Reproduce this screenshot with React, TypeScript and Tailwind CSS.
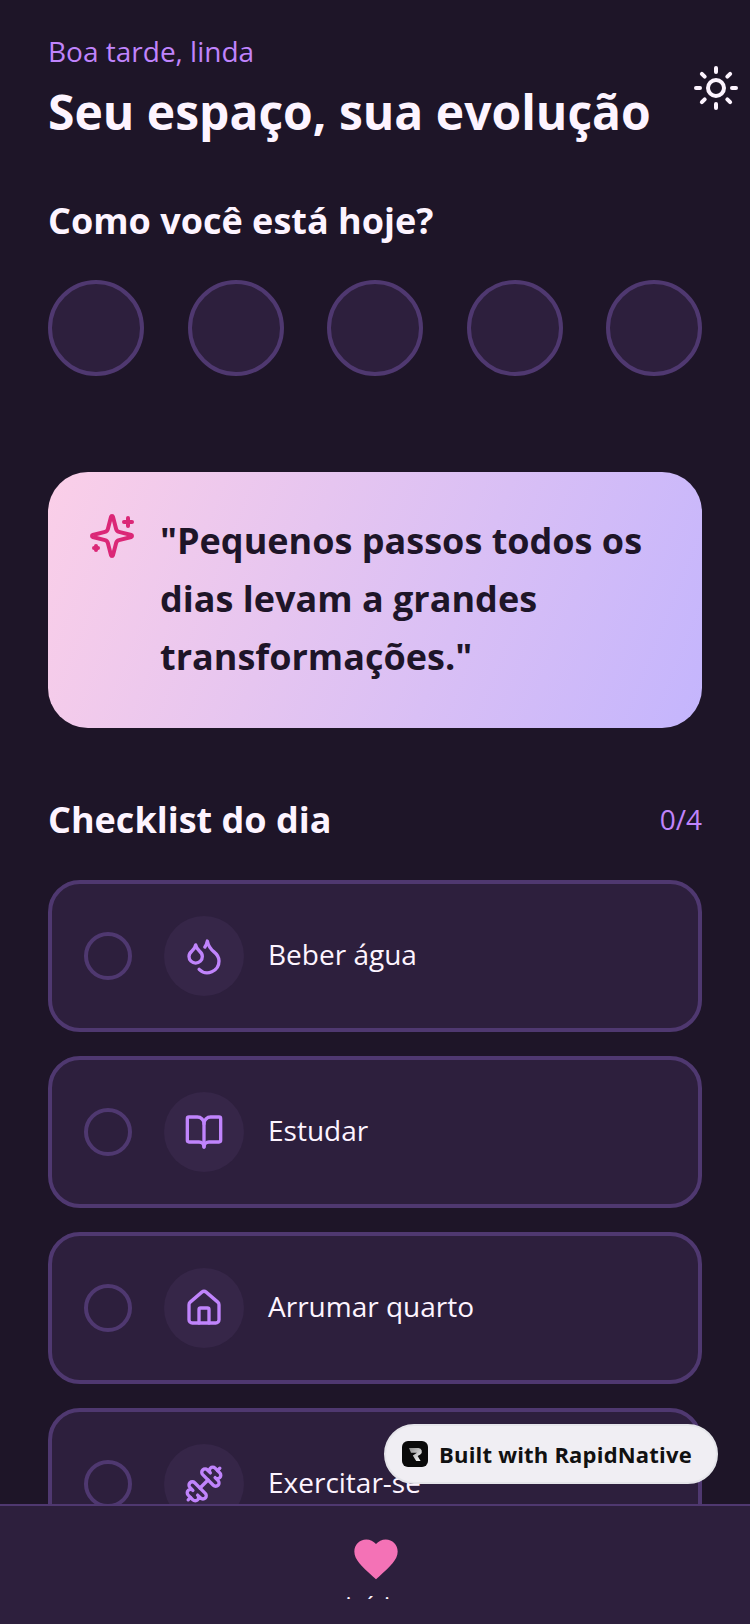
import { Sun, Droplets, BookOpen, House, Dumbbell } from "lucide-react";
import { MdFavorite } from "react-icons/md";

const rows = [
  { label: "Beber água", Icon: Droplets },
  { label: "Estudar", Icon: BookOpen },
  { label: "Arrumar quarto", Icon: House },
  { label: "Exercitar-se", Icon: Dumbbell },
];

export default function App() {
  return (
    <div className="relative flex h-[1624px] w-[750px] flex-col overflow-hidden bg-[#1e1528] font-['Open_Sans',sans-serif] text-[#fdf4ff]">
      <main className="min-h-0 flex-1 overflow-hidden px-12 pt-[31px]">
        <header className="flex items-center justify-between">
          <div>
            <p className="text-[28px] leading-[40px] text-[#c084fc]">Boa tarde, linda</p>
            <h1 className="mt-[9px] text-[48px] leading-[64px] font-bold">Seu espaço, sua evolução</h1>
          </div>
          <Sun size={48} strokeWidth={2} className="-mr-[38px] shrink-0 text-[#fdf4ff]" />
        </header>

        <h2 className="mt-[53px] text-[36px] leading-[48px] font-bold">Como você está hoje?</h2>
        <div className="mt-[35px] flex justify-between">
          {[0, 1, 2, 3, 4].map((i) => (
            <div key={i} className="h-24 w-24 rounded-full border-4 border-[#4f3870] bg-[#2d1f3d]" />
          ))}
        </div>

        <section className="mt-24 flex h-64 gap-6 rounded-[40px] bg-[linear-gradient(112deg,#fbcfe8,#c4b5fd)] p-10">
          <svg viewBox="0 0 24 24" fill="none" stroke="currentColor" strokeWidth="2" strokeLinecap="round" strokeLinejoin="round" className="h-12 w-12 shrink-0 text-[#db2777]">
            <path d="M9.937 15.5A2 2 0 0 0 8.5 14.063l-6.135-1.582a.5.5 0 0 1 0-.962L8.5 9.936A2 2 0 0 0 9.937 8.5l1.582-6.135a.5.5 0 0 1 .963 0L14.063 8.5A2 2 0 0 0 15.5 9.937l6.135 1.581a.5.5 0 0 1 0 .964L15.5 14.063a2 2 0 0 0-1.437 1.437l-1.582 6.135a.5.5 0 0 1-.963 0z" />
            <path d="M20 3v4" />
            <path d="M22 5h-4" />
            <path d="M4 17v2" />
            <path d="M5 18H3" />
          </svg>
          <p className="text-[36px] leading-[58px] font-bold text-[#1e1528]">
            "Pequenos passos todos os dias levam a grandes transformações."
          </p>
        </section>

        <div className="mt-[64px] flex items-center justify-between">
          <h2 className="text-[36px] leading-[56px] font-bold">Checklist do dia</h2>
          <span className="pb-0.5 text-[28px] leading-[40px] text-[#c084fc]">0/4</span>
        </div>

        <div className="mt-[32px] flex flex-col gap-6">
          {rows.map(({ label, Icon }) => (
            <div key={label} className="flex h-[152px] shrink-0 items-center rounded-[32px] border-4 border-[#4f3870] bg-[#2d1f3d] px-8">
              <div className="h-12 w-12 shrink-0 rounded-full border-4 border-[#4f3870]" />
              <div className="ml-8 flex h-20 w-20 shrink-0 items-center justify-center rounded-full bg-[#362648]">
                <Icon size={40} strokeWidth={2} className="text-[#c084fc]" />
              </div>
              <span className="ml-6 pb-1 text-[28px] leading-[40px]">{label}</span>
            </div>
          ))}
        </div>
      </main>

      <nav className="relative flex h-[120px] shrink-0 flex-col items-center border-t-2 border-[#4f3870] bg-[#2d1f3d] pt-[27px]">
        <MdFavorite size={52} className="ml-[2px] text-[#f472b6]" />
        <div className="mt-[8px] h-[6px] overflow-hidden text-[24px] leading-[24px]">início</div>
      </nav>

      <div className="absolute top-[1424px] left-[384px] flex h-[60px] w-[334px] items-center gap-[11px] rounded-full border-2 border-[#e5e5ea] bg-[#f0eef3] pl-[16px]">
        <svg viewBox="0 0 26 26" className="h-[26px] w-[26px] shrink-0">
          <defs>
            <linearGradient id="rn" x1="0" y1="0" x2="1" y2="1">
              <stop offset="0" stopColor="#8a8a8a" />
              <stop offset="1" stopColor="#ffffff" />
            </linearGradient>
          </defs>
          <rect width="26" height="26" rx="6" fill="#0a0a0a" />
          <path d="M7 7h9.5a3.5 3.5 0 0 1 1.8 6.4L15.6 15l3 5h-4.4l-3.4-5.6 4.2-2.6H9z" fill="url(#rn)" />
        </svg>
        <span className="text-[22px] leading-[32px] font-bold tracking-[0.2px] text-[#111111]">Built with RapidNative</span>
      </div>
    </div>
  );
}
